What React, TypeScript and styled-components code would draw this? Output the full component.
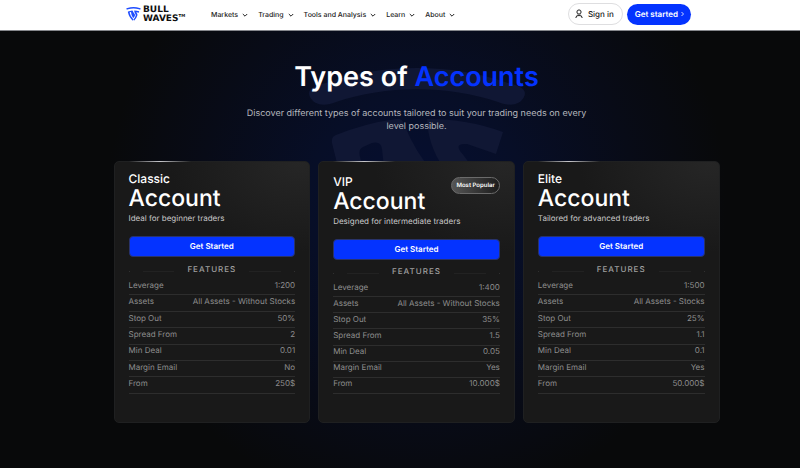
import React from "react";
import styled, { createGlobalStyle } from "styled-components";

const GlobalStyle = createGlobalStyle`
  * { box-sizing: border-box; }
  body {
    margin: 0;
    background: #08090a;
    font-family: Inter, "Liberation Sans", sans-serif;
    text-rendering: geometricPrecision;
  }
  button {
    font-family: inherit;
    text-rendering: inherit;
    cursor: pointer;
  }
`;

const Page = styled.div`
  min-height: 100vh;
  display: flex;
  flex-direction: column;
  color: #fff;
`;

const Header = styled.header`
  height: 31px;
  display: flex;
  justify-content: center;
  background: #fff;
  border-bottom: 1px solid #85878c;
  padding-left: 17px;
`;

const HeaderInner = styled.div`
  flex: 0 1 565px;
  display: flex;
  align-items: center;
  padding-bottom: 2px;
`;

const Brand = styled.a`
  display: flex;
  align-items: center;
  gap: 2px;
  color: #101010;
  text-decoration: none;
  margin-right: 21px;
`;

const Wordmark = styled.span`
  display: flex;
  flex-direction: column;
  width: 47px;
  padding-top: 1px;
  white-space: nowrap;
  font: 700 9px/8px "DejaVu Sans", sans-serif;
`;

const Trademark = styled.sup`
  font-size: 4px;
  line-height: 4px;
`;

const Nav = styled.nav`
  display: flex;
  gap: 10px;
  flex: 1;
`;

const NavButton = styled.button`
  display: flex;
  align-items: center;
  gap: 4px;
  padding: 2px 0 0;
  border: 0;
  background: none;
  color: #222;
  font-size: 7px;
  font-weight: 500;
  line-height: 10px;
  white-space: nowrap;
`;

const Actions = styled.div`
  display: flex;
  align-items: center;
  gap: 4px;
`;

const SignIn = styled.button`
  display: flex;
  align-items: center;
  gap: 5px;
  height: 22px;
  padding: 0 8px 0 6px;
  border: 1px solid #dedee0;
  border-radius: 11px;
  background: #fff;
  color: #222;
  font-size: 8px;
  font-weight: 500;
  white-space: nowrap;
`;

const Start = styled.button`
  display: flex;
  align-items: center;
  gap: 2px;
  height: 21px;
  padding: 0 6px 0 8px;
  border: 0;
  border-radius: 11px;
  background: #0433ff;
  color: #fff;
  font-size: 8px;
  font-weight: 600;
  white-space: nowrap;
`;

const Main = styled.main`
  flex: 1;
  position: relative;
  isolation: isolate;
  display: flex;
  flex-direction: column;
  align-items: center;
  padding: 28px 0 44px 33px;
  background:
    radial-gradient(ellipse 310px 310px at calc(50% + 17px) 170px, #050e32 0%, #070e27 35%, #080b17 70%, #08090a 100%),
    #08090a;
`;

const Watermark = styled.svg`
  position: absolute;
  z-index: -1;
  top: 36px;
  left: calc(50% - 92px);
`;

const Title = styled.h1`
  margin: 0;
  font-size: 27px;
  line-height: 36px;
  font-weight: 600;
  text-align: center;
`;

const Accent = styled.span`
  color: #0433ff;
`;

const Lead = styled.p`
  max-width: 340px;
  margin: 12px 0 28px;
  color: #b6b8be;
  font-size: 9px;
  line-height: 13px;
  text-align: center;
`;

const Cards = styled.section`
  width: 100%;
  max-width: 606px;
  display: grid;
  grid-template-columns: repeat(3, 1fr);
  gap: 8px;
`;

const Card = styled.article<{ $featured: boolean }>`
  position: relative;
  padding: ${(p) => (p.$featured ? 12 : 9)}px 14px 28px;
  border: 1px solid #1f2021;
  border-radius: 5px;
  background: radial-gradient(ellipse 130px 90px at 95% 0, #262626, #191919 100%);

  &::before {
    content: "";
    position: absolute;
    top: -1px;
    left: 14px;
    width: 62px;
    height: 1px;
    background: linear-gradient(90deg, transparent, #c8c8cc 50%, transparent);
  }
`;

const CardHead = styled.div`
  display: flex;
  justify-content: space-between;
  align-items: flex-start;
`;

const Name = styled.h2`
  margin: 0;
  font-size: 23px;
  line-height: 24px;
  font-weight: 500;
`;

const Tier = styled.span`
  display: block;
  font-size: 12px;
  line-height: 15px;
`;

const Badge = styled.span`
  margin-top: 3px;
  padding: 0 4px;
  border: 1px solid #6b6b6b;
  border-radius: 9px;
  background: linear-gradient(90deg, #555, #1c1c1c);
  font-size: 6px;
  line-height: 15px;
  font-weight: 600;
  white-space: nowrap;
`;

const Summary = styled.p`
  margin: 3px 0 12px;
  color: #c9c9c9;
  font-size: 8px;
  line-height: 11px;
`;

const Cta = styled.button`
  display: block;
  width: 100%;
  height: 21px;
  padding: 0 0 2px;
  border: 1px solid #29336a;
  border-radius: 4px;
  background: #0433ff;
  color: #fff;
  font-size: 8px;
  font-weight: 600;
`;

const Divider = styled.h3<{ $featured: boolean }>`
  display: flex;
  align-items: center;
  gap: 13px;
  margin: ${(p) => (p.$featured ? 5 : 6)}px 0 4px;
  color: #a0a0a0;
  font-size: 8px;
  line-height: 12px;
  font-weight: 500;
  letter-spacing: 1px;

  &::before,
  &::after {
    content: "";
    flex: 1;
    height: 1px;
    margin-top: 4px;
    background: linear-gradient(90deg, #303030 1px, transparent 1px 14px, #222 14px);
  }
  &::after {
    background: linear-gradient(270deg, #303030 1px, transparent 1px 14px, #222 14px);
  }
`;

const Specs = styled.table<{ $featured: boolean }>`
  width: 100%;
  height: ${(p) => (p.$featured ? 113 : 115)}px;
  border-collapse: collapse;
  color: #8e8e8e;
  font-size: 8px;
  line-height: 10px;
`;

const SpecName = styled.th`
  padding: 0 0 4px;
  border-bottom: 1px solid #2d2d2d;
  font-weight: 400;
  text-align: left;
`;

const SpecValue = styled.td`
  padding: 0 0 4px;
  border-bottom: 1px solid #2d2d2d;
  text-align: right;
`;

const menu = ["Markets", "Trading", "Tools and Analysis", "Learn", "About"];
const labels = ["Leverage", "Assets", "Stop Out", "Spread From", "Min Deal", "Margin Email", "From"];
const accounts = [
  { tier: "Classic", summary: "Ideal for beginner traders", values: ["1:200", "All Assets - Without Stocks", "50%", "2", "0.01", "No", "250$"] },
  { tier: "VIP", summary: "Designed for intermediate traders", badge: "Most Popular", values: ["1:400", "All Assets - Without Stocks", "35%", "1.5", "0.05", "Yes", "10.000$"] },
  { tier: "Elite", summary: "Tailored for advanced traders", values: ["1:500", "All Assets - Stocks", "25%", "1.1", "0.1", "Yes", "50.000$"] },
];

const ShieldShape = () => (
  <>
    <path d="M18 16C74-4 144-4 200 16C215 19 219 24 216 30C212 38 202 40 190 35C140 18 78 18 28 35C16 40 6 38 2 30C-1 24 3 19 18 16Z" />
    <path d="M24 76Q23 70 28 68Q58 56 88 52Q94 51 96 57Q108 87 126 106Q138 120 127 137L110 162Q105 167 101 160L83 128Q76 108 74 82Q73 74 64 76L55 80Q50 82 52 90Q64 143 108 188L100 207Q42 158 24 76Z" />
    <path d="M119 52Q160 52 195 65L188 87L159 77Q147 76 152 84Q169 104 169 119Q158 164 117 206L109 185Q132 160 143 127Q144 115 135 100Q120 78 119 52Z" />
  </>
);

const Chevron = () => (
  <svg width="6" height="6" viewBox="0 0 6 6" fill="none" stroke="#222" strokeWidth="1" aria-hidden="true">
    <path d="M0.8 2L3 4.2L5.2 2" />
  </svg>
);

export default function App() {
  return (
    <Page>
      <GlobalStyle />
      <Header>
        <HeaderInner>
          <Brand href="#" aria-label="Bull Waves">
            <svg width="15" height="14" viewBox="0 0 218 210" fill="#1f4dff" aria-hidden="true"><ShieldShape /></svg>
            <Wordmark>
              <span>BULL</span>
              <span>WAVES<Trademark>TM</Trademark></span>
            </Wordmark>
          </Brand>
          <Nav>
            {menu.map((item) => (
              <NavButton key={item}>{item}<Chevron /></NavButton>
            ))}
          </Nav>
          <Actions>
            <SignIn>
              <svg width="8" height="10" viewBox="0 0 8 10" fill="none" stroke="#222" strokeWidth="1" aria-hidden="true">
                <circle cx="4" cy="3" r="2.1" />
                <path d="M1 9V8L3 5.5M7 9V8L5 5.5M2.5 7Q4 5.8 5.5 7" />
              </svg>
              Sign in
            </SignIn>
            <Start>
              Get started
              <svg width="5" height="6" viewBox="0 0 5 6" fill="none" stroke="#fff" strokeWidth="0.8" aria-hidden="true">
                <path d="M1.5 1L3.5 3L1.5 5" />
              </svg>
            </Start>
          </Actions>
        </HeaderInner>
      </Header>
      <Main>
        <Watermark width="218" height="210" viewBox="0 0 218 210" fill="#101734" aria-hidden="true"><ShieldShape /></Watermark>
        <Title>Types of <Accent>Accounts</Accent></Title>
        <Lead>Discover different types of accounts tailored to suit your trading needs on every level possible.</Lead>
        <Cards>
          {accounts.map((a) => (
            <Card key={a.tier} $featured={!!a.badge}>
              <CardHead>
                <Name><Tier>{a.tier}</Tier>Account</Name>
                {a.badge && <Badge>{a.badge}</Badge>}
              </CardHead>
              <Summary>{a.summary}</Summary>
              <Cta>Get Started</Cta>
              <Divider $featured={!!a.badge}>FEATURES</Divider>
              <Specs $featured={!!a.badge}>
                <tbody>
                  {labels.map((label, i) => (
                    <tr key={label}>
                      <SpecName scope="row">{label}</SpecName>
                      <SpecValue>{a.values[i]}</SpecValue>
                    </tr>
                  ))}
                </tbody>
              </Specs>
            </Card>
          ))}
        </Cards>
      </Main>
    </Page>
  );
}
